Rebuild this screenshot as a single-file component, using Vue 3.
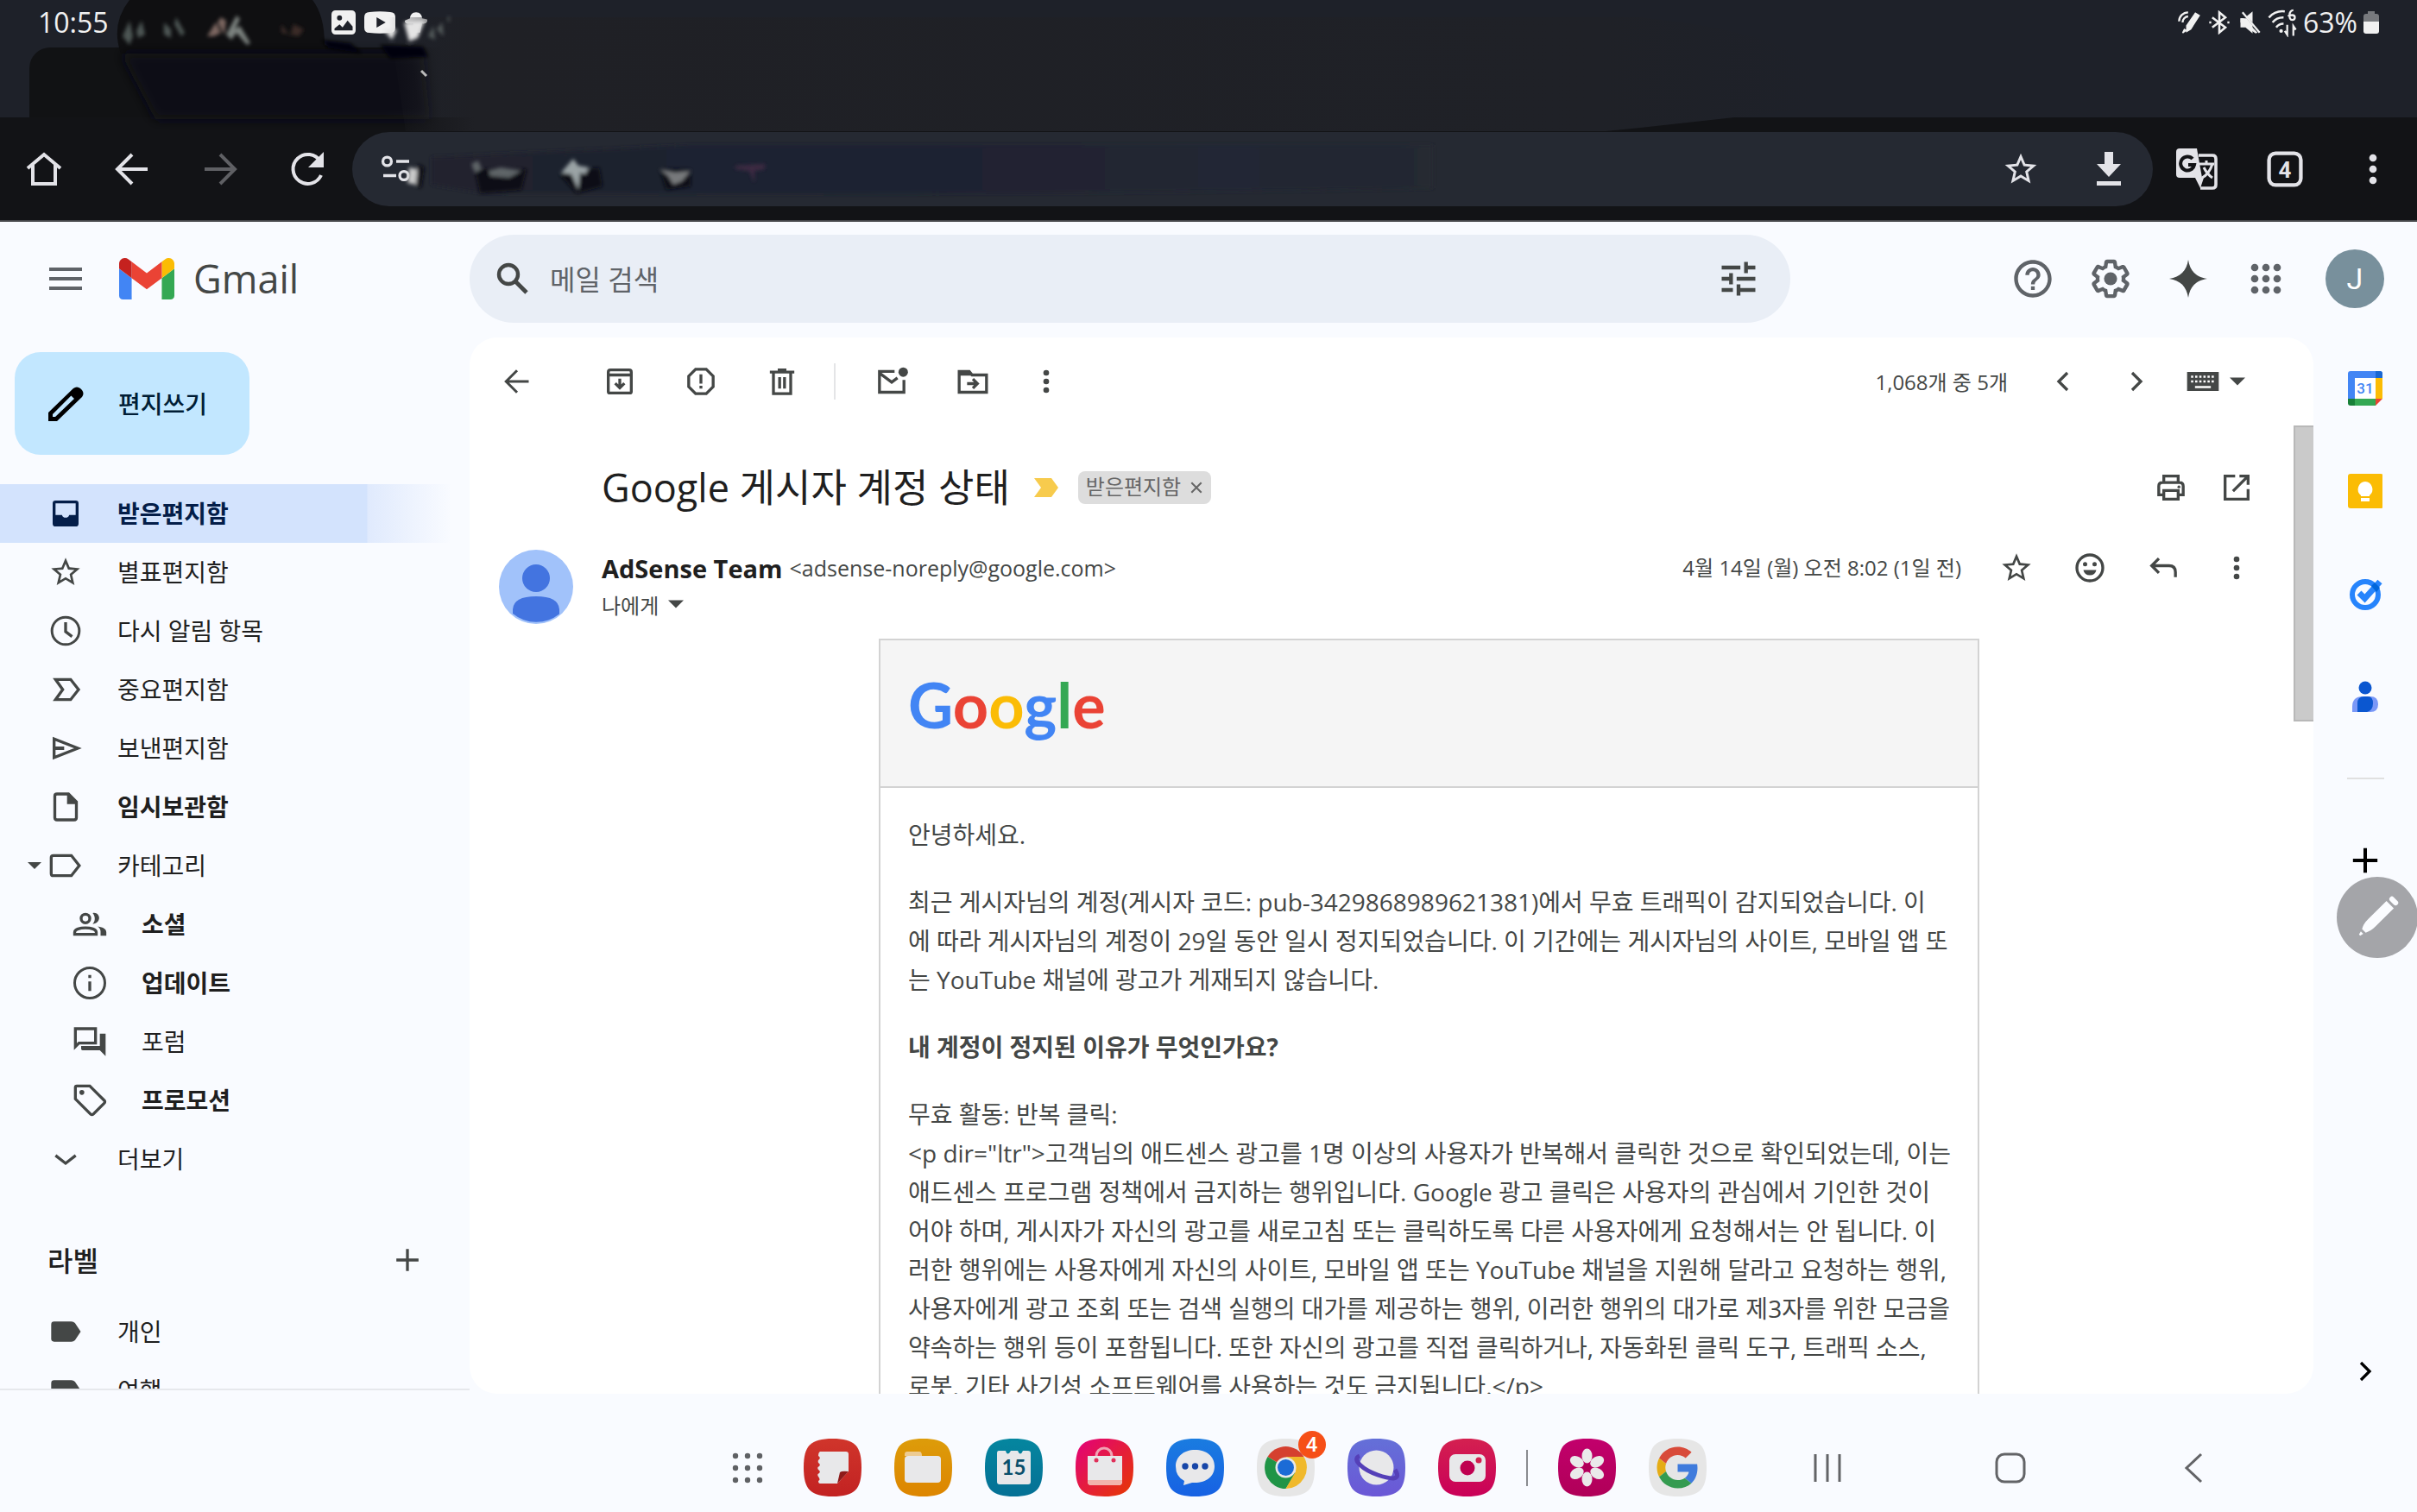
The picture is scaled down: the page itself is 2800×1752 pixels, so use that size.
<template>
  <div class="screen">
    <header class="browser">
      <div class="status-bar">
        <span class="clock">10:55</span>
        <div class="notifications">
          <Icon name="image" class="i28" />
          <Icon name="youtube" class="i36" />
          <Icon name="bell" class="i28" />
        </div>
        <div class="system">
          <Icon name="stylusStatus" class="i28" />
          <Icon name="bluetooth" class="i28" />
          <Icon name="mute" class="i28" />
          <Icon name="wifi" class="i34" />
          <span class="percent">63%</span>
          <Icon name="battery" box="0 0 18 26" class="battery" />
        </div>
      </div>
      <div class="tab-strip">
        <div class="tab"></div>
      </div>
      <div class="toolbar">
        <button class="tool" aria-label="홈"><Icon name="home" class="i48" /></button>
        <button class="tool" aria-label="뒤로"><Icon name="arrowBack" class="i48" /></button>
        <button class="tool dim" aria-label="앞으로"><Icon name="arrowForward" class="i48" /></button>
        <button class="tool" aria-label="새로고침"><Icon name="reload" class="i48" /></button>
        <div class="address">
          <button class="tool" aria-label="사이트 정보"><Icon name="siteInfo" class="i36" /></button>
          <span class="grow"></span>
          <button class="tool" aria-label="북마크"><Icon name="star" class="i44" /></button>
          <button class="tool" aria-label="다운로드"><Icon name="download" class="i48" /></button>
        </div>
        <button class="tool" aria-label="번역"><Icon name="translate" class="i48" /></button>
        <button class="tool" aria-label="탭"><Icon name="tabs" class="i52" /></button>
        <button class="tool" aria-label="메뉴"><Icon name="more" class="i52" /></button>
      </div>
      <svg class="smudges" viewBox="0 0 2800 257" aria-hidden="true" v-html="smudges"></svg>
    </header>

    <div class="gmail-header">
      <div class="brand">
        <button aria-label="기본 메뉴"><Icon name="hamburger" box="0 0 38 26" class="hamburger" /></button>
        <Icon name="gmail" box="52 42 88 66" class="gmail-logo" />
        <span class="gmail-text">Gmail</span>
      </div>
      <div class="search">
        <button aria-label="검색"><Icon name="search" class="i48" /></button>
        <input type="text" placeholder="메일 검색" aria-label="메일 검색" />
        <button aria-label="검색 옵션"><Icon name="tune" class="i52" /></button>
      </div>
      <div class="account">
        <button aria-label="지원"><Icon name="help" class="i52" /></button>
        <button aria-label="설정"><Icon name="gear" class="i52" /></button>
        <button aria-label="Gemini"><Icon name="spark" class="i44" /></button>
        <button aria-label="Google 앱"><Icon name="apps" class="i52" /></button>
        <button class="profile" aria-label="계정">J</button>
      </div>
    </div>

    <div class="workspace">
      <aside class="sidebar">
        <button class="compose"><Icon name="pencil" class="i48" /><span>편지쓰기</span></button>
        <nav>
          <a
            v-for="item in folders"
            :key="item.label"
            href="#"
            class="folder"
            :class="{ active: item.active, bold: item.bold, sub: item.sub, open: item.open }"
          >
            <Icon v-if="item.open" name="triangle" class="disclosure" />
            <Icon :name="item.icon" class="i40" />
            <span>{{ item.label }}</span>
          </a>
        </nav>
        <div class="labels-head">
          <h2>라벨</h2>
          <button aria-label="새 라벨"><Icon name="plus" class="i44" /></button>
        </div>
        <a v-for="label in labels" :key="label" href="#" class="folder">
          <Icon name="labelFill" class="i40" />
          <span>{{ label }}</span>
        </a>
      </aside>

      <main class="card">
        <div class="actions">
          <button aria-label="받은편지함으로"><Icon name="arrowBack" class="i36" /></button>
          <div class="action-group first">
            <button aria-label="보관처리"><Icon name="archive" class="i40" /></button>
            <button aria-label="스팸신고"><Icon name="spam" class="i40" /></button>
            <button aria-label="삭제"><Icon name="trash" class="i40" /></button>
          </div>
          <div class="action-group second">
            <button aria-label="읽지 않은 상태로 표시"><Icon name="unread" class="i40" /></button>
            <button aria-label="이동"><Icon name="move" class="i40" /></button>
            <button class="narrow" aria-label="더보기"><Icon name="more" class="i40" /></button>
          </div>
          <span class="grow"></span>
          <span class="count">1,068개 중 5개</span>
          <div class="icon-row">
            <button aria-label="이전"><Icon name="chevronLeft" class="i40" /></button>
            <button aria-label="다음"><Icon name="chevronRight" class="i40" /></button>
            <button class="keyboard" aria-label="입력 도구">
              <Icon name="keyboard" class="i44" />
              <Icon name="triangle" class="i36" />
            </button>
          </div>
        </div>

        <div class="subject">
          <h1>Google 게시자 계정 상태</h1>
          <Icon name="important" box="0 0 28 22" class="important" />
          <span class="chip"><span>받은편지함</span><button aria-label="라벨 삭제"><Icon name="close" box="0 0 14 14" class="close" /></button></span>
          <span class="grow"></span>
          <div class="icon-row tight">
            <button aria-label="인쇄"><Icon name="print" class="i40" /></button>
            <button aria-label="새 창"><Icon name="openNew" class="i40" /></button>
          </div>
        </div>

        <div class="message-head">
          <Icon name="person" box="0 0 86 86" class="sender-avatar" />
          <div class="sender">
            <div class="line"><strong>AdSense Team</strong><span>&lt;adsense-noreply@google.com&gt;</span></div>
            <div class="line to"><span>나에게</span><Icon name="triangle" class="i36" /></div>
          </div>
          <span class="date">4월 14일 (월) 오전 8:02 (1일 전)</span>
          <div class="icon-row">
            <button aria-label="별표"><Icon name="star" class="i40" /></button>
            <button aria-label="반응 추가"><Icon name="smile" class="i40" /></button>
            <button aria-label="답장"><Icon name="reply" class="i40" /></button>
            <button aria-label="더보기"><Icon name="more" class="i40" /></button>
          </div>
        </div>

        <div class="message">
          <article class="email">
            <div class="email-banner">
              <div class="google"><span class="b">G</span><span class="r">o</span><span class="y">o</span><span class="b">g</span><span class="g">l</span><span class="r">e</span></div>
            </div>
            <div class="email-body">
              <p v-for="(p, i) in paragraphs" :key="i" :class="{ bold: p.bold }">{{ p.text }}</p>
            </div>
          </article>
        </div>
        <div class="scroll-thumb"></div>
      </main>

      <aside class="rail">
        <button v-for="app in railApps" :key="app" :aria-label="app"><Icon :name="app" box="0 0 40 40" class="i40" /></button>
        <hr />
        <button aria-label="부가기능"><Icon name="plusBold" class="i40" /></button>
        <button class="collapse" aria-label="숨기기"><Icon name="chevronRight" class="i40" /></button>
        <button class="stylus" aria-label="펜"><Icon name="stylus" box="0 0 94 94" class="i94" /></button>
      </aside>
    </div>

    <footer class="taskbar">
      <div class="dock">
        <button class="drawer" aria-label="앱스"><Icon name="drawer" box="0 0 40 40" class="i40" /></button>
        <template v-for="app in dockApps" :key="app.icon">
          <span v-if="app.divider" class="divider"></span>
          <button class="app" :aria-label="app.icon">
            <Icon :name="app.icon" box="0 0 67 67" class="app-icon" />
            <span v-if="app.badge" class="badge">{{ app.badge }}</span>
          </button>
        </template>
      </div>
      <div class="system-nav">
        <button aria-label="최근 앱"><Icon name="recents" box="0 0 40 40" class="i40" /></button>
        <button aria-label="홈"><Icon name="homeKey" box="0 0 40 40" class="i40" /></button>
        <button aria-label="뒤로"><Icon name="backKey" box="0 0 40 40" class="i40" /></button>
      </div>
    </footer>
  </div>
</template>

<script setup>
import { h } from 'vue';

const stroke = (d, w = 2) =>
  `<path d="${d}" fill="none" stroke="currentColor" stroke-width="${w}"/>`;
const fill = (d, color = 'currentColor') => `<path d="${d}" fill="${color}"/>`;
const dots = (points, r) =>
  points.map(([x, y]) => `<circle cx="${x}" cy="${y}" r="${r}" fill="currentColor"/>`).join('');
const gridOf = (steps) => steps.flatMap((y) => steps.map((x) => [x, y]));

const squircle = (color) =>
  fill('M33.5 0C59 0 67 8 67 33.5S59 67 33.5 67 0 59 0 33.5 8 0 33.5 0Z', color);
const gradient = (id, from, to, diagonal = false) =>
  `<linearGradient id="${id}" x1="0" y1="0" x2="${diagonal ? 1 : 0}" y2="1"><stop stop-color="${from}"/><stop offset="1" stop-color="${to}"/></linearGradient>`;

const icons = {
  // status bar
  image: '<path fill-rule="evenodd" fill="currentColor" d="M4 0h16a4 4 0 0 1 4 4v16a4 4 0 0 1-4 4H4a4 4 0 0 1-4-4V4a4 4 0 0 1 4-4ZM8 5a2.500 2.500 0 1 0 0 5 2.500 2.500 0 0 0 0-5ZM3 20h18v-4l-5-6-5 7-3-3-5 4Z"/>',
  youtube: '<path fill-rule="evenodd" fill="currentColor" d="M4 4q8-1 16 0 4 0 4 4v8q0 4-4 4-8 1-16 0-4 0-4-4V8q0-4 4-4Zm5.500 4v8l7-4Z"/>',
  bell: fill('M12 2c4 0 6 3 6 6l5 1c1 3-2 5-5 4l-2 9h-5l-2-9c-4 1-9 0-8-3l5-2c0-3 2-6 6-6Z'),
  stylusStatus: fill('m9 15 9-13 5 3-9 14-5 3Zm-2 3 3 2-4 3-1-1Z') + stroke('M2 11a9 9 0 0 1 9-9M5.500 12a6 6 0 0 1 5.500-6', 2),
  bluetooth: stroke('m5 7 13 10-6 5V2l6 5L5 17M2 12h2M20 12h2', 2.2),
  mute: fill('M3 8h3l14 14-2 1L3 12Zm12-7v11L9 6Z') + fill('M3 8h6l6 7v8l-7-6H3Z') + stroke('M5 2 22 22', 2),
  wifi: stroke('M1 8a15 15 0 0 1 13-5M4 12a11 11 0 0 1 9-4M7 16a7 7 0 0 1 6-3', 1.8) + stroke('M21 2c-4 0-4 8-1 8s3-4 0-4-3 1-3 1M16 14v8l-2-3M21 23v-8l2 3', 1.6) + '<circle cx="11" cy="19" r="1.500" fill="currentColor"/>',
  battery: '<path fill="#77797d" d="M5 0h8v3h2q3 0 3 3v6H0V6q0-3 3-3h2Z"/><path fill="currentColor" d="M0 12h18v11q0 3-3 3H3q-3 0-3-3Z"/>',

  // browser toolbar
  home: stroke('M2.500 11.500 12 3.500l9.500 8M5.500 9.500v11h13v-11', 2),
  arrowBack: stroke('M21 12H4M12 3.500 3.500 12l8.500 8.500', 2),
  arrowForward: stroke('M3 12h17M12 3.500l8.500 8.500-8.500 8.500', 2),
  reload: stroke('M19.500 15.500a8.500 8.500 0 1 1-.5-8', 2) + fill('M21 2v9h-9Z'),
  siteInfo: stroke('M12 6h10M2 17h10', 2.2) + '<circle cx="5" cy="6" r="3.300" fill="none" stroke="currentColor" stroke-width="2.200"/><circle cx="18" cy="17" r="3.300" fill="none" stroke="currentColor" stroke-width="2.200"/>',
  download: fill('M9.500 2h5v7H19l-7 7.500L5 9h4.500ZM5 19h14v2.500H5Z'),
  translate: '<path fill="currentColor" d="M2 0h10l3 17H2q-2 0-2-2V2q0-2 2-2Z"/><path fill="none" stroke="currentColor" stroke-width="1.800" d="M13 4h8q2 0 2 2v15q0 2-2 2h-7"/><path fill="currentColor" d="M11 17h5l-2 6Z"/><path fill="none" stroke="currentColor" stroke-width="1.500" d="M13.500 9H22M17.500 7v2M21 9q-2 6-6 8M16 11q2 4 5 6"/><path fill="none" stroke="#121316" stroke-width="2" d="M9.500 6a4 4 0 1 0 1 3.500H7"/>',
  tabs: '<rect x="3.500" y="3.500" width="17" height="17" rx="3.500" fill="none" stroke="currentColor" stroke-width="2"/><text x="12" y="16.500" text-anchor="middle" font-size="12" font-weight="700" font-family="Roboto" fill="currentColor">4</text>',
  more: dots([[12, 6], [12, 12], [12, 18]], 2),

  // mail header
  hamburger: fill('M0 0h38v4H0ZM0 11h38v4H0ZM0 22h38v4H0Z'),
  gmail: fill('M58 108h14V74L52 59v43c0 3.320 2.690 6 6 6', '#4285f4') + fill('M120 108h14c3.320 0 6-2.690 6-6V59l-20 15', '#34a853') + fill('M120 48v26l20-15v-8c0-7.420-8.470-11.650-14.400-7.200', '#fbbc04') + fill('M72 74V48l24 18 24-18v26L96 92', '#ea4335') + fill('M52 51v8l20 15V48l-5.600-4.200c-5.940-4.450-14.400-.220-14.400 7.200', '#c5221f'),
  search: '<circle cx="9.500" cy="9.500" r="5.500" fill="none" stroke="currentColor" stroke-width="2.200"/>' + stroke('m13.500 13.500 6.500 6.500', 2.4),
  tune: fill('M3 17v2h6v-2H3zM3 5v2h10V5H3zm10 16v-2h8v-2h-8v-2h-2v6h2zM7 9v2H3v2h4v2h2V9H7zm14 4v-2H11v2h10zm-6-4h2V7h4V5h-4V3h-2v6z'),
  help: fill('M11 18h2v-2h-2v2zm1-16C6.480 2 2 6.480 2 12s4.480 10 10 10 10-4.480 10-10S17.520 2 12 2zm0 18c-4.410 0-8-3.590-8-8s3.590-8 8-8 8 3.590 8 8-3.590 8-8 8zm0-14c-2.210 0-4 1.790-4 4h2c0-1.100.9-2 2-2s2 .9 2 2c0 2-3 1.750-3 5h2c0-2.250 3-2.500 3-5 0-2.210-1.790-4-4-4z'),
  gear: fill('M13.850 22.250h-3.700c-.74 0-1.360-.54-1.450-1.270l-.27-1.890c-.27-.14-.53-.29-.79-.46l-1.800.72c-.7.26-1.470-.03-1.810-.65L2.200 15.530c-.35-.66-.2-1.440.36-1.880l1.530-1.190c-.01-.15-.02-.3-.02-.46 0-.15.01-.31.020-.46l-1.520-1.190c-.59-.45-.74-1.260-.37-1.880l1.850-3.190c.34-.62 1.110-.9 1.790-.63l1.810.73c.26-.17.52-.32.78-.46l.27-1.910c.09-.7.71-1.250 1.440-1.250h3.700c.74 0 1.360.54 1.450 1.270l.27 1.890c.27.14.53.29.79.46l1.800-.72c.71-.26 1.480.03 1.820.65l1.840 3.180c.36.66.2 1.440-.36 1.880l-1.520 1.190c.01.15.02.3.02.46s-.01.31-.02.46l1.520 1.190c.56.45.72 1.230.37 1.860l-1.860 3.220c-.34.62-1.110.9-1.800.63l-1.800-.72c-.26.17-.52.32-.78.46l-.27 1.910c-.1.680-.72 1.220-1.460 1.220zm-3.230-2h2.760l.37-2.550.53-.22c.44-.18.88-.44 1.340-.78l.45-.34 2.380.96 1.380-2.400-2.030-1.580.07-.56c.03-.26.060-.51.060-.78s-.03-.53-.06-.78l-.07-.56 2.030-1.580-1.390-2.400-2.390.96-.45-.35c-.42-.32-.87-.58-1.330-.77l-.52-.22-.37-2.550h-2.760l-.37 2.550-.53.210c-.44.190-.88.440-1.340.790l-.45.33-2.380-.95-1.390 2.390 2.030 1.580-.07.560a7 7 0 0 0-.06.790c0 .26.020.53.060.78l.07.56-2.030 1.580 1.380 2.400 2.390-.96.45.35c.43.330.86.580 1.330.77l.53.22.38 2.550z') + '<circle cx="12" cy="12" r="3.500" fill="currentColor"/>',
  spark: fill('M12 0c1 7 5 11 12 12-7 1-11 5-12 12-1-7-5-11-12-12 7-1 11-5 12-12Z'),
  apps: dots(gridOf([6, 12, 18]), 2),

  // folders
  pencil: '<path fill="currentColor" fill-rule="evenodd" d="M2 22v-5L16.500 3q2-1.500 4 0l1 1q1.500 2 0 4L7 22Zm2.500-2.500H6L17 9l-1.800-1.800L4.500 18Z"/>',
  inbox: '<path fill="currentColor" fill-rule="evenodd" d="M5 3h14q2 0 2 2v14q0 2-2 2H5q-2 0-2-2V5q0-2 2-2Zm0 2v8h4.500a2.600 2.600 0 0 0 5 0H19V5Z"/>',
  star: fill('m22 9.240-7.190-.62L12 2 9.190 8.630 2 9.240l5.460 4.730L5.820 21 12 17.270 18.180 21l-1.630-7.030L22 9.240zM12 15.400l-3.760 2.270 1-4.280-3.320-2.880 4.380-.38L12 6.100l1.710 4.040 4.380.38-3.320 2.880 1 4.280L12 15.400z'),
  clock: '<circle cx="12" cy="12" r="9.500" fill="none" stroke="currentColor" stroke-width="1.800"/>' + stroke('M12 6v6.500l4.500 3.500', 2),
  importance: stroke('M5 5h10.500l5.500 7-5.500 7H5l5-7Z', 2),
  send: '<path fill="none" stroke="currentColor" stroke-width="2" d="M4 5.500v13L20.500 12Z"/>' + stroke('M4 12h7', 2.4),
  draft: '<path fill="none" stroke="currentColor" stroke-width="2" d="M14 3H6q-1.500 0-1.500 1.500v15Q4.500 21 6 21h12q1.500 0 1.500-1.500V8.500Z"/>' + fill('M13 3h2l5 5v2h-7Z'),
  label: stroke('M3.500 5h12.500l5.500 7-5.500 7H3.500q-1.500 0-1.500-1.500v-11Q2 5 3.500 5Z', 2),
  labelFill: fill('M4 5h12q1.500 0 2.500 1l4 6-4 6q-1 1-2.500 1H4q-2 0-2-2V7q0-2 2-2Z'),
  people: '<circle cx="9" cy="8" r="3" fill="none" stroke="currentColor" stroke-width="2"/><path fill="none" stroke="currentColor" stroke-width="2" d="M1.500 19v-1.500c0-4 15-4 15 0V19Z"/>' + fill('M14 4.200c5-1.200 7 6.500 0 7.700 2-2.300 2-5.300 0-7.700ZM17.500 13.500c4 .5 6 2 6 4V20h-4v-3q0-2-2-3.500Z'),
  info: '<circle cx="12" cy="12" r="10.500" fill="none" stroke="currentColor" stroke-width="1.800"/>' + fill('M11 11h2v6.500h-2ZM11 6.500h2v2h-2Z'),
  forum: stroke('M2 3h14v10H4.500L2 15.500Z', 2) + fill('M19 6.500h4V22l-4-4H7q-1 0-1-1v-2h13Z'),
  tag: '<path fill="none" stroke="currentColor" stroke-width="2" d="M3 2h9l10 10q1 1 0 2l-7.500 7.500q-1 1-2 0L2 11V3q0-1 1-1Z"/><circle cx="6.500" cy="6.500" r="1.700" fill="currentColor"/>',
  expand: stroke('m5 9.500 7 5.500 7-5.500', 2),
  triangle: fill('M6 9h12L12 15Z'),
  plus: stroke('M12 5v14M5 12h14', 1.8),
  plusBold: stroke('M12 3.500v17M3.500 12h17', 2.4),

  // message actions
  archive: '<path fill="none" stroke="currentColor" stroke-width="2" d="M4 7V5.500Q4 4 5.500 4h13Q20 4 20 5.500V19q0 1-1 1H5q-1 0-1-1ZM3.500 7.500h17"/>' + stroke('M12 10v6M8.800 13.300l3.200 3.200 3.200-3.200', 2),
  spam: stroke('M8.300 3.500h7.400l4.800 4.800v7.400l-4.800 4.800H8.300l-4.800-4.800V8.300Z', 2) + fill('M11 7h2v6.500h-2ZM11 15h2v2h-2Z'),
  trash: stroke('M6 6v14.500h12V6M3.500 5.500h17M9 4h6M10.300 9v8M13.700 9v8', 2),
  unread: stroke('M14 5H3.500v14.500h17V11M4 6.500l8 6 4-3', 2) + '<circle cx="20" cy="5.500" r="3.300" fill="currentColor"/>',
  move: stroke('M2.500 5h7l2 2.500h10v12h-19Z', 2) + fill('M2 5h8l2 3H2Z') + stroke('M8 13.500h7M12 10.300l3.200 3.200-3.200 3.200', 2),
  chevronLeft: stroke('m15 6-6 6 6 6', 2),
  chevronRight: stroke('m9 6 6 6-6 6', 2),
  keyboard: fill('M2 6h20v12H2Z') + '<path d="M4.500 9h15M4.500 12h15" stroke="#fff" stroke-width="1.400" stroke-dasharray="1.400 1.200"/><path d="M7 15.500h10" stroke="#fff" stroke-width="1.400"/>',
  important: fill('M0 0h20l8 11-8 11H0l8-11Z', '#f7cb4d'),
  close: stroke('m2 2 10 10M12 2 2 12', 1.8),
  print: stroke('M7 8V4h10v4M7 17H3.500v-6Q3.500 8.500 6 8.500h12q2.500 0 2.500 2.500v6H17M7 14h10v6H7Z', 2) + '<circle cx="17.500" cy="11.500" r="1" fill="currentColor"/>',
  openNew: stroke('M11 4H4v16h16v-7M14 4h6v6M20 4 9.500 14.500', 2),
  smile: '<circle cx="12" cy="12" r="9" fill="none" stroke="currentColor" stroke-width="2"/>' + dots([[8.700, 9.500], [15.300, 9.500]], 1.5) + fill('M7.500 13.500h9a4.600 4.600 0 0 1-9 0Z'),
  reply: stroke('M20.500 18.500V15q0-4.500-4.500-4.500H4.500M9 5.500l-5 5 5 5', 2),
  person: '<circle cx="43" cy="43" r="43" fill="#a1c2fa"/><circle cx="43" cy="33" r="16" fill="#4374e0"/><path fill="#4374e0" d="M16 74V69q1-15 27-15t27 15v5.500A43 43 0 0 1 16 74Z"/>',

  // side panel
  calendar: fill('M3 0h34q3 0 3 3v6H0V3q0-3 3-3Z', '#4285f4') + fill('M0 8h8v24H0Z', '#4285f4') + fill('M32 0h5q3 0 3 3v6h-8Z', '#1967d2') + fill('M32 8h8v24h-8Z', '#fbbc04') + fill('M8 32h24v8H8Z', '#34a853') + fill('M0 32h8v8H3q-3 0-3-3Z', '#188038') + fill('M32 32h8l-8 8Z', '#ea4335') + fill('M8 8h24v24H8Z', '#fff') + '<text x="20" y="26" text-anchor="middle" font-size="17" font-weight="500" font-family="Roboto" fill="#4285f4">31</text>',
  keep: '<rect width="41" height="40" rx="3" fill="#fbbc04"/><path fill="#fff" d="M20 9a9 9 0 0 0-5 16v1h10v-1a9 9 0 0 0-5-16ZM15 28h10v4H15Z"/>',
  tasks: '<circle cx="20" cy="21" r="15" fill="none" stroke="#2684fc" stroke-width="6"/><path fill="none" stroke="#2684fc" stroke-width="7" d="m13 19 6.500 6.500L37 6"/><path fill="#0066da" d="m27 11 4-4 6 6-4 5Z"/>',
  contacts: '<circle cx="20" cy="10" r="7.500" fill="#0b57d0"/><path fill="#7a98f7" d="M5 38V32Q5 20 17 20h9q9 0 9 9 0 9-9 9Z"/><path fill="#0b57d0" d="M11 38V28q0-8 8-8h4q6 0 6 8t-7 10Z"/>',
  stylus: '<circle cx="47" cy="47" r="47" fill="#a4a5a9"/><g transform="rotate(45 47 47)" fill="#fbfcff"><rect x="41" y="17" width="12" height="6" rx="3"/><path d="M41 26h12v30q0 8-3 13h-6q-3-5-3-13ZM45 72h4l-1 4h-2Z"/></g>',

  // dock
  drawer: dots(gridOf([6, 20, 34]), 3.2),
  notes: gradient('gNotes', '#d0352b', '#c22222') + squircle('url(#gNotes)') + fill('M19 15h30q3 0 3 3v20l-13 14H19q-2 0-2-3 3-1 0-5-2-3 1-4 2-2-1-4-2-3 1-4 2-2-1-4-1-3 1-4 2-2-1-4 0-4 2-5Z', '#e8e8ea') + fill('M52 38q-8-1-10 1l-3 13Z', '#8e1a1a'),
  files: gradient('gFiles', '#dd9c0a', '#dd8500') + squircle('url(#gFiles)') + fill('M12 18q0-3 3-3h14q3 0 3 5H12Z', '#edcb92') + '<rect x="12" y="20" width="42" height="31" rx="4" fill="#e8e8ea"/>',
  planner: gradient('gPlan', '#05869f', '#057095') + squircle('url(#gPlan)') + fill('M16 14h8q2 7 6 0h8q3 7 6 0h6q3 0 3 3v33q0 3-3 3H17q-3 0-3-3V17q0-3 2-3Z', '#e8e8ea') + '<text x="33.500" y="42" text-anchor="middle" font-size="24" font-weight="700" font-family="Lato" fill="#0a4f6b">15</text>',
  store: gradient('gStore', '#e3007b', '#e63900', true) + squircle('url(#gStore)') + '<path fill="none" stroke="#f0a3b4" stroke-width="3" d="M24 24v-4a9 9 0 0 1 18 0v4"/>' + fill('M14 20h40v30q0 4-4 4H18q-4 0-4-4Z', '#e8e8ea') + fill('M14 48h40q0 6-4 6H18q-4 0-4-6Z', '#f2b3ac') + '<circle cx="24" cy="25" r="2.500" fill="#e0305a"/><circle cx="44" cy="25" r="2.500" fill="#e0305a"/>',
  messages: gradient('gMsg', '#1a7ce0', '#1761e3') + squircle('url(#gMsg)') + fill('M33.500 13C20 13 11 21 11 32q0 12 10 17l-1 5 10-3C46 52 56 44 56 32S46 13 33.500 13Z', '#e8e8ea') + '<g fill="#1746a8"><circle cx="22" cy="32" r="3.700"/><circle cx="33.500" cy="32" r="3.700"/><circle cx="45" cy="32" r="3.700"/></g>',
  chrome: squircle('#e6e6e6') + fill('M33.500 33.500 12.500 21a24.500 24.500 0 0 1 42 0Z', '#d5402f') + fill('M33.500 33.500 12.500 21A24.500 24.500 0 0 0 33.500 58L45 40Z', '#1f9446') + fill('M33.500 21h21A24.500 24.500 0 0 1 33.500 58L45 38Z', '#f0b92b') + '<circle cx="33.500" cy="33.500" r="12" fill="#e8e8ea"/><circle cx="33.500" cy="33.500" r="9.500" fill="#1b6bd6"/>',
  internet: gradient('gNet', '#6470d8', '#6b57d6') + squircle('url(#gNet)') + '<circle cx="33.500" cy="33.500" r="20" fill="#e8e8ea"/><path fill="none" stroke="#5540b8" stroke-width="5" d="M14 20C4 24 18 36 35 42s28 6 20-6"/>',
  camera: gradient('gCam', '#d42050', '#c90058') + squircle('url(#gCam)') + '<rect x="13" y="18" width="42" height="32" rx="7" fill="#e8e8ea"/><circle cx="34" cy="34" r="8.500" fill="#bf0050"/><circle cx="47" cy="25" r="3.500" fill="#d42050"/>',
  gallery: gradient('gGal', '#c2006c', '#b00058') + squircle('url(#gGal)') + [0, 60, 120, 180, 240, 300].map((a) => `<ellipse cx="33.500" cy="20" rx="6" ry="8.500" fill="#eaeaea" transform="rotate(${a} 33.500 33.500)"/>`).join('') + '<circle cx="33.500" cy="33.500" r="4.500" fill="#b00058"/>',
  google: squircle('#e6e6e6') + '<g transform="translate(9.500 9.500)">' + fill('M24 9.500c3.540 0 6.710 1.220 9.210 3.600l6.850-6.850C35.900 2.380 30.470 0 24 0 14.620 0 6.510 5.380 2.560 13.220l7.980 6.190C12.430 13.720 17.740 9.500 24 9.500z', '#d84b3a') + fill('M46.980 24.550c0-1.570-.15-3.090-.38-4.550H24v9.020h12.940c-.58 2.960-2.260 5.480-4.780 7.180l7.730 6c4.510-4.180 7.090-10.360 7.090-17.650z', '#3f7bdc') + fill('M10.530 28.590c-.48-1.450-.76-2.990-.76-4.590s.27-3.140.76-4.590l-7.980-6.190C.92 16.460 0 20.120 0 24c0 3.880.92 7.540 2.560 10.780l7.970-6.190z', '#e5ac15') + fill('M24 48c6.480 0 11.930-2.130 15.890-5.810l-7.730-6c-2.150 1.450-4.920 2.300-8.160 2.300-6.260 0-11.570-4.220-13.470-9.910l-7.980 6.190C6.510 42.620 14.620 48 24 48z', '#349b50') + '</g>',
  recents: stroke('M6 4v32M20 4v32M34 4v32', 3),
  homeKey: '<rect x="4" y="4" width="32" height="32" rx="9" fill="none" stroke="currentColor" stroke-width="3"/>',
  backKey: stroke('M29 4 12 20l17 16', 3),
};

const Icon = (props) =>
  h('svg', { viewBox: props.box || '0 0 24 24', 'aria-hidden': 'true', innerHTML: icons[props.name] });
Icon.props = ['name', 'box'];

const folders = [
  { icon: 'inbox', label: '받은편지함', active: true, bold: true },
  { icon: 'star', label: '별표편지함' },
  { icon: 'clock', label: '다시 알림 항목' },
  { icon: 'importance', label: '중요편지함' },
  { icon: 'send', label: '보낸편지함' },
  { icon: 'draft', label: '임시보관함', bold: true },
  { icon: 'label', label: '카테고리', open: true },
  { icon: 'people', label: '소셜', sub: true, bold: true },
  { icon: 'info', label: '업데이트', sub: true, bold: true },
  { icon: 'forum', label: '포럼', sub: true },
  { icon: 'tag', label: '프로모션', sub: true, bold: true },
  { icon: 'expand', label: '더보기' },
];

const labels = ['개인', '여행'];

const paragraphs = [
  { text: '안녕하세요.' },
  {
    text: `최근 게시자님의 계정(게시자 코드: pub-3429868989621381)에서 무효 트래픽이 감지되었습니다. 이
에 따라 게시자님의 계정이 29일 동안 일시 정지되었습니다. 이 기간에는 게시자님의 사이트, 모바일 앱 또
는 YouTube 채널에 광고가 게재되지 않습니다.`,
  },
  { text: '내 계정이 정지된 이유가 무엇인가요?', bold: true },
  {
    text: `무효 활동: 반복 클릭:
<p dir="ltr">고객님의 애드센스 광고를 1명 이상의 사용자가 반복해서 클릭한 것으로 확인되었는데, 이는
애드센스 프로그램 정책에서 금지하는 행위입니다. Google 광고 클릭은 사용자의 관심에서 기인한 것이
어야 하며, 게시자가 자신의 광고를 새로고침 또는 클릭하도록 다른 사용자에게 요청해서는 안 됩니다. 이
러한 행위에는 사용자에게 자신의 사이트, 모바일 앱 또는 YouTube 채널을 지원해 달라고 요청하는 행위,
사용자에게 광고 조회 또는 검색 실행의 대가를 제공하는 행위, 이러한 행위의 대가로 제3자를 위한 모금을
약속하는 행위 등이 포함됩니다. 또한 자신의 광고를 직접 클릭하거나, 자동화된 클릭 도구, 트래픽 소스,
로봇, 기타 사기성 소프트웨어를 사용하는 것도 금지됩니다.</p>`,
  },
];

const railApps = ['calendar', 'keep', 'tasks', 'contacts'];

const dockApps = [
  { icon: 'notes' },
  { icon: 'files' },
  { icon: 'planner' },
  { icon: 'store' },
  { icon: 'messages' },
  { icon: 'chrome', badge: 4 },
  { icon: 'internet' },
  { icon: 'camera' },
  { icon: 'gallery', divider: true },
  { icon: 'google' },
];

// erased parts of the tab strip and the address bar
const smudges = `
  <defs>
    <filter id="soft" x="-20%" y="-50%" width="140%" height="200%"><feGaussianBlur stdDeviation="7"/></filter>
    <filter id="fine" x="-50%" y="-50%" width="200%" height="200%"><feGaussianBlur stdDeviation="2"/></filter>
    <linearGradient id="wipe"><stop stop-color="#1f2025" stop-opacity="0"/><stop offset=".06" stop-color="#1f2025"/><stop offset=".85" stop-color="#1f2127"/><stop offset="1" stop-color="#1e2129"/></linearGradient>
    <linearGradient id="navy"><stop stop-color="#20242e"/><stop offset=".4" stop-color="#1f2231"/><stop offset=".8" stop-color="#212634"/><stop offset="1" stop-color="#252932"/></linearGradient>
  </defs>
  <path fill="#0f0f11" d="M150 0h212q14 18 14 52l30 10H140q-12-34 10-62Z"/>
  <path fill="#0f1012" filter="url(#soft)" d="M140 62h350l8 76H180Z"/>
  <path fill="url(#wipe)" d="M450 20H1900q180 20 200 60v46l-200 22-40 4H470Z"/>
  <path filter="url(#fine)" fill="url(#navy)" d="M500 182l300-14h860v50q-400 8-1100 6l-60-10Z"/>
  <g filter="url(#fine)">
    <path fill="#4d5754" d="m142 42 8-18 4 18-4 10ZM158 36l6-12 4 16-8 4ZM190 40v-14l8 8v10ZM204 20l10 18-4 4-8-14Z"/>
    <path fill="#7b6660" d="m240 42 10-16 6 12-8 4ZM252 26l8 14 2-16-6-4Z"/>
    <path fill="#7c827f" d="m262 40 12-22 4 4-6 12 6-4 12 20-4 2-12-14-6 8Z"/>
    <path fill="#3a2a28" d="m326 28 10 14 4-14 12 6-6 8-20-4Z"/>
    <path fill="#e4e4e4" d="M444 34h16l-6 12ZM468 26l24-2-8 20-10 4Z"/>
    <path fill="#050607" d="M372 46l34 4 14 12-40-6ZM440 52l50 2 6 12-44 2Z"/>
    <path fill="#555b5c" d="m496 42 6-12 2 16ZM506 34l6-8 2 16ZM518 22l3-4v8Z"/>
    <path fill="#c9c9c9" d="m474 194 10 2-2 18-10-2Z"/>
    <path fill="#0d1017" d="M484 190l8 4-4 24-6-2ZM550 196h60l-6 24-48 4ZM648 202l46-8 4 22-30 8ZM764 196h36v20l-28 4Z"/>
    <path fill="#5f6568" d="m546 190 8-4 4 10-8 4ZM566 198l14-4 24 4-14 8-22-2Z"/>
    <path fill="#9aa3a5" d="m650 200 14-16 6 8 12 2-4 8-6-2-2 20-8-18Z"/>
    <path fill="#77797c" d="m764 196 18 4 18-2-10 12-10 4-6-10Z"/>
    <path fill="#3d2a42" d="m852 192 34-2v6l-12 2v14l-6-14-16-2Z"/>
  </g>
  <path stroke="#bbb" stroke-width="3" d="m488 82 6 6"/>`;
</script>

<style>
body {
  margin: 0;
  background: #f9fbff;
}
</style>

<style scoped>
.screen {
  display: flex;
  flex-direction: column;
  height: 100vh;
  overflow: hidden;
  background: #f9fbff;
  color: #1f1f1f;
  font-family: "Open Sans", "Noto Sans CJK KR", sans-serif;
  font-size: 28px;
}

button {
  display: flex;
  align-items: center;
  justify-content: center;
  padding: 0;
  border: 0;
  background: none;
  color: inherit;
  font: inherit;
}

svg {
  display: block;
  flex: none;
}

h1,
h2,
p {
  margin: 0;
}

.grow {
  flex: 1;
}

.i28 { width: 28px; height: 28px; }
.i34 { width: 34px; height: 34px; }
.i36 { width: 36px; height: 36px; }
.i40 { width: 40px; height: 40px; }
.i44 { width: 44px; height: 44px; }
.i48 { width: 48px; height: 48px; }
.i52 { width: 52px; height: 52px; }
.i94 { width: 94px; height: 94px; }

/* browser */
.browser {
  position: relative;
  flex: none;
  background: #1e2129;
  color: #e3e3e8;
}

.status-bar {
  display: flex;
  align-items: center;
  height: 52px;
  padding: 0 44px;
  color: #f1f1f1;
  font-size: 32px;
  line-height: 52px;
}

.notifications {
  display: flex;
  align-items: center;
  gap: 10px;
  margin-left: 258px;
}

.system {
  display: flex;
  align-items: center;
  gap: 7px;
  margin-left: auto;
}

.battery {
  width: 18px;
  height: 26px;
}

.tab-strip {
  height: 84px;
  padding: 3px 0 0 34px;
  box-sizing: border-box;
}

.tab {
  width: 480px;
  height: 100%;
  border-radius: 24px 0 0 0;
  background: linear-gradient(90deg, #111214 85%, #1e2129);
}

.toolbar {
  display: flex;
  align-items: center;
  height: 119px;
  border-bottom: 2px solid #444548;
  background: #121316;
}

.tool {
  flex: none;
  width: 102px;
  height: 86px;
}

.dim {
  color: #5f6064;
}

.address {
  display: flex;
  flex: 1;
  align-items: center;
  height: 86px;
  border-radius: 43px;
  background: #252932;
}

.smudges {
  position: absolute;
  top: 0;
  left: 0;
  width: 100%;
  height: 100%;
  pointer-events: none;
}

/* mail header */
.gmail-header {
  display: flex;
  align-items: center;
  flex: none;
  height: 132px;
  padding-bottom: 2px;
}

.brand {
  display: flex;
  align-items: center;
  flex: none;
  width: 544px;
  box-sizing: border-box;
  padding-left: 57px;
  color: #5f6368;
}

.hamburger {
  width: 38px;
  height: 26px;
}

.gmail-logo {
  width: 64px;
  height: 48px;
  margin: 0 22px 0 43px;
}

.gmail-text {
  color: #444746;
  font-size: 45px;
  line-height: 48px;
}

.search {
  display: flex;
  align-items: center;
  flex: 0 1 1530px;
  height: 102px;
  padding: 0 34px 0 26px;
  box-sizing: border-box;
  border-radius: 51px;
  background: #e9eef6;
  color: #444746;
}

.search input {
  flex: 1;
  padding: 0;
  margin-left: 19px;
  border: 0;
  outline: 0;
  background: none;
  font: inherit;
  font-size: 32px;
}

.search input::placeholder {
  color: #5f6368;
  opacity: 1;
}

.account {
  display: flex;
  align-items: center;
  gap: 48px;
  margin-left: auto;
  padding-right: 38px;
  color: #5f6368;
}

.account button {
  width: 42px;
}

.account button:nth-child(3) {
  color: #444746;
}

.account .profile {
  width: 68px;
  height: 68px;
  border-radius: 50%;
  background: #78909c;
  color: #fff;
  font-family: Roboto, sans-serif;
  font-size: 34px;
}

/* sidebar */
.workspace {
  display: flex;
  flex: 1;
  min-height: 0;
}

.sidebar {
  flex: none;
  width: 544px;
  margin-bottom: 4px;
  box-sizing: border-box;
  overflow: hidden;
  border-bottom: 2px solid #e6e8ec;
}

.compose {
  gap: 37px;
  height: 119px;
  margin: 17px 0 34px 17px;
  padding: 0 49px 0 35px;
  border-radius: 30px;
  background: #c2e7ff;
  color: #001d35;
  font-weight: 500;
}

.compose svg {
  color: #000;
}

.compose span,
.folder span,
.count,
.chip span {
  padding-bottom: 2px;
}

.folder {
  display: flex;
  align-items: center;
  gap: 40px;
  height: 68px;
  padding-left: 56px;
  color: #1f1f1f;
  text-decoration: none;
}

.folder svg {
  color: #444746;
}

.folder.sub {
  padding-left: 84px;
}

.folder.open {
  padding-left: 24px;
}

.disclosure {
  width: 32px;
  height: 32px;
  margin-right: -40px;
}

.folder.active {
  background: linear-gradient(90deg, #d3e3fd 425px, #e0eafd 426px, #f9fbff 523px);
}

.folder.active,
.folder.active svg {
  color: #041e49;
}

.bold {
  font-weight: 700;
}

.labels-head {
  display: flex;
  align-items: center;
  justify-content: space-between;
  height: 98px;
  margin-top: 34px;
  padding: 0 50px 0 55px;
  color: #444746;
}

.labels-head h2 {
  padding-bottom: 2px;
  color: #1f1f1f;
  font-size: 32px;
  font-weight: 500;
}

/* message card */
.card {
  position: relative;
  flex: 1;
  min-width: 0;
  overflow: hidden;
  border-radius: 32px;
  background: #fff;
  color: #444746;
}

.actions {
  display: flex;
  align-items: center;
  height: 102px;
  padding: 0 70px 0 25px;
  font-size: 24px;
}

.actions button {
  width: 60px;
}

.action-group {
  display: flex;
  gap: 34px;
}

.first {
  margin-left: 59px;
  padding-right: 30px;
  border-right: 2px solid #e4e5e7;
  height: 42px;
}

.second {
  padding-left: 35px;
}

.actions .narrow {
  width: 42px;
}

.count,
.date {
  margin-right: 39px;
  white-space: nowrap;
  font-size: 24px;
}

.icon-row {
  display: flex;
  align-items: center;
  gap: 35px;
}

.icon-row button {
  width: 50px;
}

.icon-row.tight {
  gap: 26px;
}

.icon-row .keyboard {
  width: auto;
  margin-left: -5px;
}

.subject {
  display: flex;
  align-items: center;
  height: 144px;
  padding: 0 64px 0 153px;
}

.subject h1 {
  color: #1f1f1f;
  font-size: 45px;
  font-weight: 400;
  line-height: 60px;
}

.important {
  width: 28px;
  height: 22px;
  margin: 0 23px 0 28px;
}

.chip {
  display: flex;
  align-items: center;
  gap: 10px;
  height: 38px;
  padding: 0 9px;
  border-radius: 8px;
  background: #ddd;
  color: #666;
  font-size: 24px;
  line-height: 36px;
}

.close {
  width: 16px;
  height: 16px;
}

.message-head {
  display: flex;
  padding: 0 64px 0 34px;
}

.sender-avatar {
  width: 86px;
  height: 86px;
}

.sender {
  flex: 1;
  margin-left: 33px;
}

.line {
  display: flex;
  align-items: center;
  height: 42px;
  font-size: 25px;
}

.line strong {
  margin-right: 8px;
  color: #1f1f1f;
  font-size: 29px;
}

.to {
  gap: 2px;
  font-size: 24px;
}

.date,
.message-head .icon-row {
  height: 42px;
  line-height: 42px;
}

.message {
  padding: 17px 66px 0 153px;
}

.email {
  max-width: 1275px;
  box-sizing: border-box;
  margin: 0 auto;
  border: 2px solid #d3d3d3;
}

.email-banner {
  height: 171px;
  padding: 22px 0 0 32px;
  box-sizing: border-box;
  border-bottom: 2px solid #d3d3d3;
  background: #f5f5f5;
}

.google {
  font-family: Lato, sans-serif;
  font-size: 72px;
  font-weight: 700;
  line-height: 104px;
}

.google .b { color: #4285f4; }
.google .r { color: #ea4335; }
.google .y { color: #fbbc05; }
.google .g { color: #34a853; }

.email-body {
  padding: 32px;
  line-height: 45px;
  white-space: pre;
}

.email-body p + p {
  margin-top: 33px;
}

.scroll-thumb {
  position: absolute;
  top: 102px;
  right: 0;
  width: 23px;
  height: 343px;
  box-sizing: border-box;
  border: 2px solid #b8b8b8;
  border-right: 0;
  background: #cacaca;
}

/* side panel */
.rail {
  position: relative;
  display: flex;
  flex-direction: column;
  align-items: center;
  flex: none;
  gap: 79px;
  width: 120px;
  padding: 39px 0 6px;
  box-sizing: border-box;
  color: #000;
}

.rail hr {
  width: 43px;
  margin: -5px 0;
  border: 0;
  border-top: 2px solid #e0e0e0;
}

.rail .collapse {
  margin-top: auto;
}

.rail .stylus {
  position: absolute;
  top: 625px;
  right: -1px;
}

/* taskbar */
.taskbar {
  display: grid;
  grid-template-columns: 1fr auto 1fr;
  align-items: center;
  flex: none;
  height: 137px;
  padding: 34px 0 0 22px;
  box-sizing: border-box;
}

.dock {
  display: flex;
  grid-column: 2;
  align-items: center;
  gap: 38px;
  color: #5f6164;
}

.drawer {
  margin-right: 7px;
}

.app {
  position: relative;
}

.app-icon {
  width: 67px;
  height: 67px;
}

.badge {
  position: absolute;
  top: -9px;
  right: -13px;
  width: 32px;
  height: 32px;
  border-radius: 50%;
  background: #f64f17;
  color: #fff;
  font: 500 24px/32px Roboto, sans-serif;
  text-align: center;
}

.divider {
  width: 2px;
  height: 42px;
  margin: 0 -3px;
  background: #8a8c90;
}

.system-nav {
  display: flex;
  justify-content: flex-end;
  padding-right: 153px;
  color: #636467;
}

.system-nav button {
  width: 212px;
}
</style>
